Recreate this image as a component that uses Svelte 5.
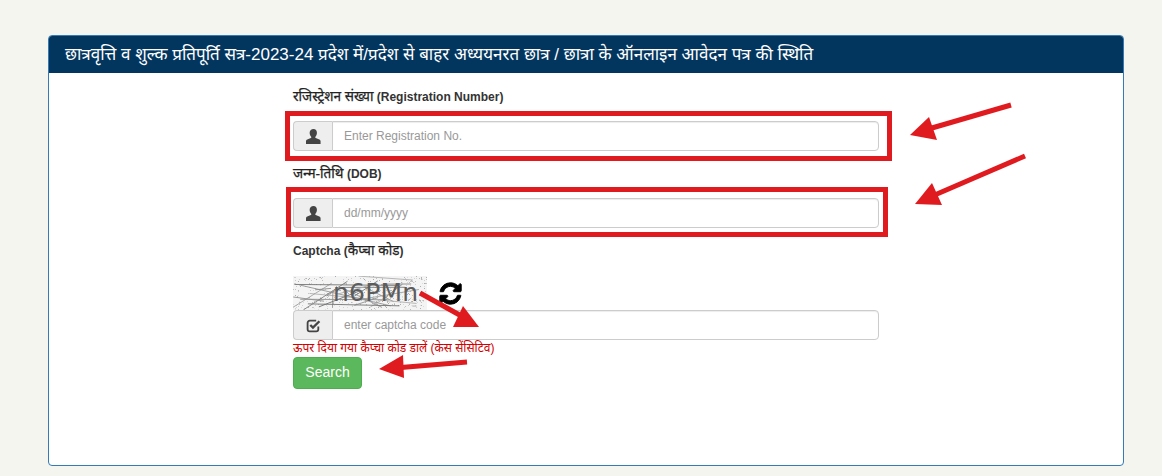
<script lang="ts">
  // seeded noise so the captcha looks the same on every load
  let seed = 7;
  const rnd = (max: number) => {
    seed = (seed * 16807) % 2147483647;
    return (seed / 2147483647) * max;
  };
  const noiseLines = Array.from({ length: 24 }, () => ({
    x1: rnd(134),
    y1: rnd(34),
    x2: rnd(134),
    y2: rnd(34),
    shade: 110 + Math.round(rnd(70))
  }));
  const speckles = Array.from({ length: 420 }, () => ({
    x: Math.round(rnd(134)),
    y: Math.round(rnd(34)),
    shade: 170 + Math.round(rnd(60))
  }));

  const arrows = [
    { tail: '1011,105 925,130', head: '910,135 929,117 937,140' },
    { tail: '1025,156 930,197', head: '915,204 932,183 942,205' },
    { tail: '420,293 465,318', head: '479,327 463,306 453,327' },
    { tail: '467,362 395,368', head: '379,369 403,355 404,378' }
  ];
</script>

<div class="page">
  <section class="panel">
    <header class="panel-heading">छात्रवृत्ति व शुल्क प्रतिपूर्ति सत्र-2023-24 प्रदेश में/प्रदेश से बाहर अध्ययनरत छात्र / छात्रा के ऑनलाइन आवेदन पत्र की स्थिति</header>
    <form class="panel-body" on:submit|preventDefault>
      <div class="form-group">
        <label for="reg"><span class="hi">रजिस्ट्रेशन संख्या</span> (Registration Number)</label>
        <div class="input-group">
          <span class="addon">
            <svg width="15" height="15" viewBox="0 0 14 14"><path d="M7 0c2 0 3.200 1.500 3.200 3.600 0 1.500-.6 2.900-1.400 3.700-.3.400-.2 1 .3 1.200l3.300 1.300c.8.300 1.200.9 1.200 1.700V14H0v-2.500c0-.8.400-1.400 1.200-1.700l3.300-1.300c.5-.2.600-.8.300-1.200C4 6.500 3.400 5.100 3.400 3.600 3.400 1.500 5 0 7 0z" fill="#444" /></svg>
          </span>
          <input id="reg" type="text" placeholder="Enter Registration No." />
        </div>
      </div>
      <div class="form-group">
        <label for="dob"><span class="hi">जन्म-तिथि</span> (DOB)</label>
        <div class="input-group">
          <span class="addon">
            <svg width="15" height="15" viewBox="0 0 14 14"><path d="M7 0c2 0 3.200 1.500 3.200 3.600 0 1.500-.6 2.900-1.400 3.700-.3.400-.2 1 .3 1.200l3.300 1.300c.8.300 1.200.9 1.200 1.700V14H0v-2.500c0-.8.400-1.400 1.200-1.700l3.300-1.300c.5-.2.600-.8.300-1.200C4 6.500 3.400 5.100 3.400 3.600 3.400 1.500 5 0 7 0z" fill="#444" /></svg>
          </span>
          <input id="dob" type="text" placeholder="dd/mm/yyyy" />
        </div>
      </div>
      <div class="captcha-group">
        <label for="captcha">Captcha (<span class="hi">कैप्चा कोड</span>)</label>
        <div class="captcha-row">
          <div class="captcha-image">
            <svg width="134" height="34" viewBox="0 0 134 34">
              {#each speckles as s}
                <rect x={s.x} y={s.y} width="1" height="1" fill={`rgb(${s.shade},${s.shade},${s.shade})`} />
              {/each}
              {#each noiseLines as l}
                <line x1={l.x1} y1={l.y1} x2={l.x2} y2={l.y2} stroke={`rgb(${l.shade},${l.shade},${l.shade})`} stroke-width="0.9" />
              {/each}
            </svg>
            <span class="captcha-text">n6PMn</span>
          </div>
          <svg class="refresh" width="25" height="25" viewBox="0 0 1792 1792"><path d="M1639 1056q0 5-1 7-64 268-268 434.5t-478 166.5q-146 0-282.5-55t-243.5-157l-129 129q-19 19-45 19t-45-19-19-45v-448q0-26 19-45t45-19h448q26 0 45 19t19 45-19 45l-137 137q71 66 161 102t187 36q134 0 250-65t186-179q11-17 53-117 8-23 30-23h192q13 0 22.500 9.500t9.500 22.500zm25-800v448q0 26-19 45t-45 19h-448q-26 0-45-19t-19-45 19-45l138-138q-148-137-349-137-134 0-250 65t-186 179q-11 17-53 117-8 23-30 23h-199q-13 0-22.500-9.500t-9.500-22.500v-7q65-268 270-434.500t480-166.500q146 0 284 55.500t245 156.500l130-129q19-19 45-19t45 19 19 45z" fill="#000" stroke="#000" stroke-width="70" /></svg>
        </div>
        <div class="input-group">
          <span class="addon">
            <svg width="15" height="15" viewBox="0 0 14 14" fill="none" stroke="#444" stroke-width="1.700"><path d="M11.500 8v2.500a2 2 0 0 1-2 2h-6a2 2 0 0 1-2-2v-6a2 2 0 0 1 2-2h6" /><path d="M4 6.500l2.500 2.500L12.500 3" stroke-width="2.200" /></svg>
          </span>
          <input id="captcha" type="text" placeholder="enter captcha code" />
        </div>
        <p class="hint">ऊपर दिया गया कैप्चा कोड डालें (केस सेंसिटिव)</p>
      </div>
      <button type="submit" class="search">Search</button>
    </form>
  </section>

  <!-- red markup drawn over the screenshot -->
  <svg class="markup" width="1162" height="476" viewBox="0 0 1162 476">
    <rect x="287.500" y="113.500" width="602" height="45" fill="none" stroke="#e01b1f" stroke-width="5" />
    <rect x="288.500" y="189.500" width="597" height="45" fill="none" stroke="#e01b1f" stroke-width="5" />
    {#each arrows as a}
      <polyline points={a.tail} stroke="#e01b1f" stroke-width="5" fill="none" />
      <polygon points={a.head} fill="#e01b1f" />
    {/each}
  </svg>
</div>

<style>
  :global(body) {
    background: #f5f5ef;
  }

  .page {
    position: relative;
    height: 476px;
    padding: 35px 38px 10px 48px;
    box-sizing: border-box;
    font-family: "Liberation Sans", "Noto Sans", "DejaVu Sans", sans-serif;
    font-size: 12px;
    color: #333;
    overflow: hidden;
  }

  .panel {
    display: flex;
    flex-direction: column;
    height: 100%;
    background: #fff;
    border: 1px solid #337ab7;
    border-radius: 4px;
    box-sizing: border-box;
  }

  .panel-heading {
    height: 37px;
    padding: 0 16px 3px;
    box-sizing: border-box;
    display: flex;
    align-items: center;
    background: #03365f;
    border-radius: 3px 3px 0 0;
    color: #fff;
    font-size: 17px;
    white-space: nowrap;
    flex: none;
  }

  .panel-body {
    padding: 16px 0 0 244px;
    width: 586px;
    box-sizing: content-box;
  }

  label {
    display: block;
    height: 17px;
    font-weight: 700;
    color: #333;
    line-height: 17px;
  }

  .hi {
    font-size: 13.6px;
    font-weight: 400;
    line-height: 1;
    color: #222;
    -webkit-text-stroke: 0.25px #222;
  }

  .form-group {
    margin-bottom: 15px;
  }

  .form-group label {
    margin-bottom: 15px;
  }

  .input-group {
    display: flex;
    height: 30px;
  }

  .addon {
    width: 39px;
    flex: none;
    display: flex;
    align-items: center;
    justify-content: center;
    background: #eee;
    border: 1px solid #ccc;
    border-right: 0;
    border-radius: 4px 0 0 4px;
    box-sizing: border-box;
  }

  input {
    flex: 1;
    min-width: 0;
    padding: 0 11px;
    border: 1px solid #ccc;
    border-radius: 0 4px 4px 0;
    box-sizing: border-box;
    font: inherit;
    box-shadow: inset 0 1px 1px rgba(0, 0, 0, 0.075);
  }

  input::placeholder {
    color: #999;
    opacity: 1;
  }

  .captcha-row {
    display: flex;
    align-items: center;
    gap: 11px;
    margin-top: 16px;
  }

  .captcha-image {
    position: relative;
    width: 134px;
    height: 34px;
    background: #f4f4f4;
  }

  .captcha-image svg {
    display: block;
  }

  .captcha-text {
    position: absolute;
    left: 40px;
    top: 0;
    font-family: "DejaVu Sans", sans-serif;
    font-size: 25px;
    line-height: 34px;
    letter-spacing: 0.2px;
    color: #5c5c5c;
  }

  .hint {
    margin: 1px 0 0;
    height: 15px;
    color: #d20000;
    font-size: 12px;
    line-height: 15px;
  }

  .search {
    display: block;
    margin-top: 1px;
    width: 69px;
    height: 32px;
    padding: 0 0 2px;
    background: #5cb85c;
    border: 1px solid #4cae4c;
    border-radius: 4px;
    color: #fff;
    font: inherit;
    font-size: 14px;
    cursor: pointer;
  }

  .markup {
    position: absolute;
    left: 0;
    top: 0;
    pointer-events: none;
  }
</style>
